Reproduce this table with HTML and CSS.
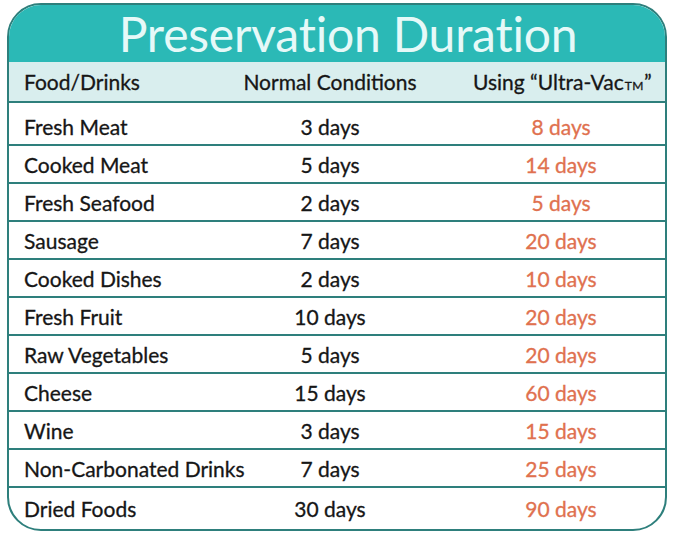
FILE: index.html
```html
<!DOCTYPE html>
<html>
<head>
<meta charset="utf-8">
<link rel="stylesheet" href="styles.css">
</head>
<body>
<div class="card">
  <div class="title">Preservation Duration</div>
  <div class="row head">
    <div class="c1">Food/Drinks</div>
    <div class="c2">Normal Conditions</div>
    <div class="c3">Using “Ultra-Vac<span class="tm">TM</span>”</div>
  </div>
  <div class="row first"><div class="c1">Fresh Meat</div><div class="c2">3 days</div><div class="c3">8 days</div></div>
  <div class="row"><div class="c1">Cooked Meat</div><div class="c2">5 days</div><div class="c3">14 days</div></div>
  <div class="row"><div class="c1">Fresh Seafood</div><div class="c2">2 days</div><div class="c3">5 days</div></div>
  <div class="row"><div class="c1">Sausage</div><div class="c2">7 days</div><div class="c3">20 days</div></div>
  <div class="row"><div class="c1">Cooked Dishes</div><div class="c2">2 days</div><div class="c3">10 days</div></div>
  <div class="row"><div class="c1">Fresh Fruit</div><div class="c2">10 days</div><div class="c3">20 days</div></div>
  <div class="row"><div class="c1">Raw Vegetables</div><div class="c2">5 days</div><div class="c3">20 days</div></div>
  <div class="row"><div class="c1">Cheese</div><div class="c2">15 days</div><div class="c3">60 days</div></div>
  <div class="row"><div class="c1">Wine</div><div class="c2">3 days</div><div class="c3">15 days</div></div>
  <div class="row"><div class="c1">Non-Carbonated Drinks</div><div class="c2">7 days</div><div class="c3">25 days</div></div>
  <div class="row last"><div class="c1">Dried Foods</div><div class="c2">30 days</div><div class="c3">90 days</div></div>
</div>
</body>
</html>
```
FILE: styles.css
```css
html, body {
  margin: 0;
  padding: 0;
  background: #ffffff;
}
body {
  font-family: Lato, "Open Sans", sans-serif;
  color: #161616;
}
.card {
  margin: 3px 0 0 7px;
  width: 660px;
  height: 528px;
  box-sizing: border-box;
  border: 2px solid #2e7f7c;
  border-radius: 34px;
  overflow: hidden;
  display: flex;
  flex-direction: column;
  background: #fff;
}
.title {
  height: 57px;
  flex: none;
  box-sizing: border-box;
  padding-left: 22px;
  background: #2bb9b6;
  color: #e6f9f8;
  font-size: 48px;
  line-height: 57px;
  text-align: center;
  letter-spacing: -0.2px;
}
.row {
  display: grid;
  grid-template-columns: 206px 230px 220px;
  align-items: center;
  height: 38px;
  flex: none;
  box-sizing: border-box;
  border-bottom: 2px solid #2e7f7c;
  font-size: 21px;
  -webkit-text-stroke: 0.3px currentColor;
}
.row.head {
  height: 41px;
  background: #d9eeee;
  font-size: 21px;
}
.row.first {
  height: 43px;
  padding-top: 5px;
}
.row.last {
  flex: 1;
  border-bottom: none;
}
.c1 {
  padding-left: 15px;
  white-space: nowrap;
}
.c2 {
  text-align: center;
  white-space: nowrap;
}
.c3 {
  text-align: center;
  padding-left: 12px;
  color: #e0714f;
  white-space: nowrap;
}
.head .c3 {
  text-align: left;
  padding-left: 28px;
  color: #161616;
}
.tm {
  font-size: 12px;
  letter-spacing: 0.5px;
  margin-left: 1px;
}
```
